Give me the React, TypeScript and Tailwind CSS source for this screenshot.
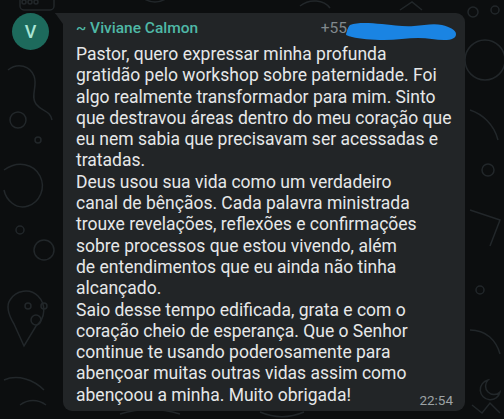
import React from 'react';

const lines = [
  'Pastor, quero expressar minha profunda',
  'gratidão pelo workshop sobre paternidade. Foi',
  'algo realmente transformador para mim. Sinto',
  'que destravou áreas dentro do meu coração que',
  'eu nem sabia que precisavam ser acessadas e',
  'tratadas.',
  'Deus usou sua vida como um verdadeiro',
  'canal de bênçãos. Cada palavra ministrada',
  'trouxe revelações, reflexões e confirmações',
  'sobre processos que estou vivendo, além',
  'de entendimentos que eu ainda não tinha',
  'alcançado.',
  'Saio desse tempo edificada, grata e com o',
  'coração cheio de esperança. Que o Senhor',
  'continue te usando poderosamente para',
  'abençoar muitas outras vidas assim como',
];

function Doodles() {
  // faint wallpaper doodles
  return (
    <svg className="absolute inset-0" width="504" height="419" fill="none" stroke="#22272a" strokeWidth="1.5">
      <rect x="20" y="-6" width="34" height="16" rx="4" />
      <circle cx="24" cy="2" r="2" />
      <circle cx="30" cy="2" r="2" />
      <circle cx="36" cy="2" r="2" />
      <path d="M8 70c10-8 22-4 26 6s-4 20 2 28 14 6 16 16" />
      <circle cx="18" cy="120" r="8" />
      <circle cx="38" cy="140" r="3" />
      <path d="M4 170c14-10 30-6 36 6s0 26-12 30-22-6-24-16" />
      <circle cx="20" cy="230" r="4" />
      <circle cx="44" cy="250" r="10" />
      <path d="M10 300c6-10 20-12 28-4s8 22-2 30l-12 20-10-22c-6-10-8-18-4-24z" />
      <circle cx="36" cy="320" r="5" />
      <circle cx="28" cy="306" r="3" />
      <circle cx="44" cy="306" r="3" />
      <path d="M4 380c14-6 30 0 40 10" />
      <path d="M20 405c8-6 18-6 26 0" />
      <circle cx="485" cy="60" r="20" />
      <circle cx="473" cy="12" r="5" />
      <circle cx="495" cy="10" r="4" />
      <path d="M470 110c12 4 24 14 28 30" />
      <circle cx="488" cy="170" r="6" />
      <path d="M470 210l30 10-10 26" />
      <circle cx="480" cy="290" r="4" />
      <path d="M470 330c16 0 26 10 30 24" />
      <path d="M488 380a10 10 0 1 0 12 12a8 8 0 0 1-12-12z" />
      <path d="M472 405l10 8 8-10 10 10" />
      <path d="M140 -4c10 8 20 8 30 0" />
      <path d="M300 6c10-8 24-6 30 2" />
      <path d="M120 414c20-6 40-6 60 0" />
      <path d="M260 412c14 6 30 6 44 0" />
      <path d="M400 10l12-8 10 8" />
    </svg>
  );
}

export default function App() {
  return (
    <div
      className="relative w-[504px] h-[419px] overflow-hidden bg-[#0c0e0f]"
      style={{ fontFamily: 'Roboto, "Noto Sans", sans-serif' }}
    >
      <Doodles />
      <div className="relative flex pt-[13px] pl-[12px]">
        {/* Avatar */}
        <div className="w-[37px] h-[37px] rounded-full bg-[#1d6a5c] flex items-center justify-center text-[#a8e4d4] text-[18px] font-medium shrink-0">
          V
        </div>

        {/* Tail */}
        <svg width="8" height="11" viewBox="0 0 8 11" className="ml-[6px] shrink-0">
          <path d="M0 0h8v11L1.5 2C0.5 1 0 0.6 0 0z" fill="#222527" />
        </svg>

        {/* Bubble */}
        <div className="w-[402px] h-[398px] bg-[#222527] rounded-[9px] rounded-tl-none pl-[13px] pr-[8px] pt-[5px]">
          <div className="flex items-center h-[22px] text-[15.5px]">
            <span className="text-[#4fb8a6] font-medium">~ Viviane Calmon</span>
            <span className="ml-auto flex items-center text-[#81898d]">
              <span>+55</span>
              <svg width="111" height="20" viewBox="0 0 111 20" className="-ml-[1px] mt-[3px]">
                <path
                  d="M4 4C12 1 24 2 36 3s22 3 32 2 20-3 28-1 14 5 14 9-4 6-12 6-16-2-26-2-22 2-34 2-24-1-32-3S0 14 1 10s3-6 3-6z"
                  fill="#1a84e3"
                />
              </svg>
            </span>
          </div>
          <div className="mt-[4px] text-[17.5px] leading-[21.3px] text-[#e6e8e9] whitespace-nowrap">
            {lines.map((l, i) => (
              <div key={i}>{l}</div>
            ))}
            <div className="flex items-end">
              <span>abençoou a minha. Muito obrigada!</span>
              <span className="ml-auto mr-[4px] text-[13.5px] leading-[16px] text-[#9ca2a5] translate-y-[2px]">22:54</span>
            </div>
          </div>
        </div>
      </div>
    </div>
  );
}
